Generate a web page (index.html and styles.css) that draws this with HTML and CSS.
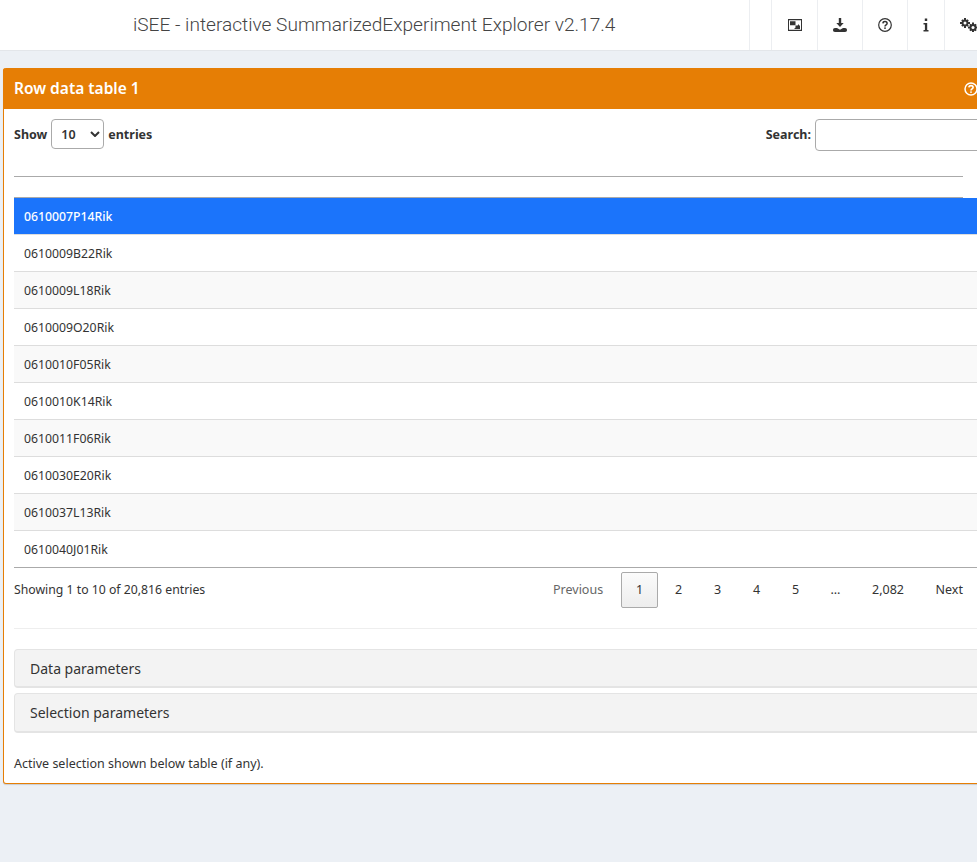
FILE: index.html
```html
<!DOCTYPE html>
<html lang="en">
<head>
<meta charset="utf-8">
<title>iSEE</title>
<link rel="stylesheet" href="styles.css">
</head>
<body>
<header class="navbar">
  <div class="brand">iSEE - interactive SummarizedExperiment Explorer v2.17.4</div>
  <nav class="nav-items">
    <div class="nav-item w22"></div>
    <div class="nav-item w46">
      <svg class="icon" viewBox="0 0 14 14" width="14" height="14"><path fill="#333" fill-rule="evenodd" d="M0 1h14v12H0zM1 2.300v9.400h12V2.300z"/><path fill="#333" d="M2 3.300h5.500v4H2zM7.500 7.500h4.500v3.500H7.500zM6 11l5-5v5z"/></svg>
    </div>
    <div class="nav-item w45">
      <svg class="icon" viewBox="0 0 14 14" width="14" height="14"><path fill="#333" d="M5.800 0h2.400v5h2.500L7 9 3.300 5h2.500zM0 12c0-1.200.8-2 2-2h2l3 1.700 3-1.700h2c1.200 0 2 .8 2 2 0 1-.6 2-2 2H2c-1.400 0-2-1-2-2z"/></svg>
    </div>
    <div class="nav-item w45">
      <svg class="icon" viewBox="0 0 14 14" width="14" height="14"><circle cx="7" cy="7" r="6.300" fill="none" stroke="#333" stroke-width="1.200"/><path fill="none" stroke="#333" stroke-width="1.500" d="M4.900 5.400C5 4 6 3.600 7 3.600c1.200 0 2.100.7 2.100 1.800C9.100 6.900 7 6.800 7 8.500"/><rect x="6.200" y="9.400" width="1.600" height="1.500" fill="#333"/></svg>
    </div>
    <div class="nav-item w37">
      <svg class="icon" viewBox="0 0 6 14" width="6" height="14"><path fill="#333" d="M1.800.5h2.400v2.400H1.800zM.5 5h3.700v7H5.500v1.500H.5V12h1.400V6.500H.5z"/></svg>
    </div>
    <div class="nav-item w50">
      <svg class="icon cogs" viewBox="0 0 18 14" width="18" height="14"><g fill="#333"><circle cx="5" cy="5" r="3.400"/><path d="M4 0h2v10H4zM0 4h10v2H0zM1.200 2.600l1.400-1.400 6.200 6.200-1.400 1.400zM7.400 1.200l1.400 1.400-6.200 6.200-1.400-1.400z"/><circle cx="13" cy="9.500" r="3.400"/><path d="M12 4.500h2v10h-2zM8 8.500h10v2H8zM9.200 7.100l1.400-1.400 6.200 6.200-1.400 1.400zM15.400 5.700l1.400 1.400-6.200 6.200-1.400-1.400z"/></g><circle cx="5" cy="5" r="1.500" fill="#fff"/><circle cx="13" cy="9.500" r="1.500" fill="#fff"/></svg>
    </div>
  </nav>
</header>

<main class="box">
  <div class="box-header">
    <h3 class="box-title">Row data table 1</h3>
    <svg class="help" viewBox="0 0 14 14" width="14" height="14"><circle cx="7" cy="7" r="6" fill="none" stroke="#fff" stroke-width="1.500"/><path fill="none" stroke="#fff" stroke-width="1.600" d="M4.900 5.400C5 4 6 3.600 7 3.600c1.200 0 2.100.7 2.100 1.800C9.100 6.900 7 6.800 7 8.500"/><rect x="6.200" y="9.400" width="1.600" height="1.500" fill="#fff"/></svg>
  </div>
  <div class="box-body">
    <div class="controls">
      <label class="ctl">Show
        <span class="select">10
          <svg viewBox="0 0 10 6" width="10" height="6"><path fill="none" stroke="#333" stroke-width="2" d="M1 1l4 4 4-4"/></svg>
        </span>
        entries</label>
      <label class="ctl">Search: <span class="search"></span></label>
    </div>
    <div class="head-space"></div>
    <div class="rows">
      <div class="row selected">0610007P14Rik</div>
      <div class="row">0610009B22Rik</div>
      <div class="row odd">0610009L18Rik</div>
      <div class="row">0610009O20Rik</div>
      <div class="row odd">0610010F05Rik</div>
      <div class="row">0610010K14Rik</div>
      <div class="row odd">0610011F06Rik</div>
      <div class="row">0610030E20Rik</div>
      <div class="row odd">0610037L13Rik</div>
      <div class="row">0610040J01Rik</div>
    </div>
    <div class="footer">
      <div class="info">Showing 1 to 10 of 20,816 entries</div>
      <div class="pager">
        <span class="pg prev">Previous</span>
        <span class="pg num current">1</span>
        <span class="pg num">2</span>
        <span class="pg num">3</span>
        <span class="pg num">4</span>
        <span class="pg num">5</span>
        <span class="pg dots">…</span>
        <span class="pg big">2,082</span>
        <span class="pg next">Next</span>
      </div>
    </div>
    <hr class="rule">
    <div class="collapse first">Data parameters</div>
    <div class="collapse second">Selection parameters</div>
    <p class="note">Active selection shown below table (if any).</p>
  </div>
</main>
</body>
</html>
```

FILE: styles.css
```css
html, body { margin: 0; padding: 0; }
body {
  width: 977px;
  height: 862px;
  overflow: hidden;
  background: #ecf0f5;
  color: #333;
  font-family: "Noto Sans", sans-serif;
  font-size: 12.25px;
}
.navbar {
  display: flex;
  justify-content: space-between;
  width: 1000px;
  height: 50px;
  background: #fff;
  border-bottom: 1px solid #e3e6ea;
}
.brand {
  padding-left: 133px;
  line-height: 50px;
  font-family: Roboto, sans-serif;
  font-weight: 300;
  font-size: 19.1px;
  color: #444;
}
.nav-items { display: flex; margin-left: auto; }
.nav-item {
  display: flex;
  align-items: center;
  justify-content: center;
  height: 50px;
  box-sizing: border-box;
  border-left: 1px solid #eceef1;
}
.w22 { width: 22px; }
.w46 { width: 46px; }
.w45 { width: 45px; }
.w37 { width: 37px; }
.w50 { width: 56px; justify-content: flex-start; padding-left: 15px; }
.icon { display: block; margin-top: -1px; }
.box {
  width: 1000px;
  box-sizing: border-box;
  margin: 17px 0 0 3px;
  background: #fff;
  border: 1px solid #e67e05;
  border-top: 0;
  border-radius: 3px;
  box-shadow: 0 1px 1px rgba(0, 0, 0, .15);
}
.box-header {
  display: flex;
  align-items: center;
  justify-content: space-between;
  height: 41px;
  margin: 0 -1px;
  padding: 0 16px 0 11px;
  background: #e67e05;
  color: #fff;
  border-radius: 3px 3px 0 0;
}
.box-title { margin: 0 0 2px; font-size: 15.5px; font-weight: 600; }
.help { margin-right: 9px; }
.box-body { padding: 10px; }
.controls {
  display: flex;
  justify-content: space-between;
  align-items: flex-start;
  height: 34px;
}
.ctl {
  display: flex;
  align-items: center;
  gap: 4px;
  font-weight: 700;
  font-size: 12.5px;
  height: 30px;
}
.select {
  display: flex;
  align-items: center;
  justify-content: space-between;
  box-sizing: border-box;
  width: 53px;
  height: 30px;
  padding: 0 3px 0 9px;
  border: 1px solid #aaa;
  border-radius: 4px;
  font-weight: 600;
}
.search {
  display: block;
  box-sizing: border-box;
  width: 177px;
  height: 32px;
  margin-bottom: -2px;
  border: 1px solid #aaa;
  border-radius: 4px;
}
.head-space {
  width: 949px;
  box-sizing: border-box;
  height: 22px;
  margin-top: 23px;
  border-top: 1px solid #aaa;
  border-bottom: 1px solid #aaa;
}
.row {
  box-sizing: border-box;
  height: 37px;
  padding-left: 10px;
  line-height: 37px;
  border-bottom: 1px solid #ddd;
  background: #fff;
}
.row:last-child { border-bottom-color: #aaa; }
.odd { background: #f9f9f9; }
.selected { background: #1b74fb; color: #fff; font-weight: 500; }
.footer {
  display: flex;
  justify-content: space-between;
  padding-right: 29px;
  height: 60px;
}
.info { padding-top: 13px; }
.pager { display: flex; align-items: flex-start; padding-top: 4px; font-size: 12.5px; }
.pg {
  box-sizing: border-box;
  height: 36px;
  line-height: 36px;
  text-align: center;
}
.prev { width: 68px; color: #666; text-align: left; }
.num { width: 39px; }
.current {
  width: 37px;
  margin-right: 1px;
  line-height: 34px;
  background: linear-gradient(#fbfbfb, #ededed);
  border: 1px solid #aaa;
  border-radius: 2px;
}
.dots { width: 41px; }
.big { width: 64px; }
.next { width: 43px; text-align: right; }
.rule { margin: 0; border: 0; border-top: 1px solid #eee; }
.collapse {
  box-sizing: border-box;
  height: 39px;
  margin-top: 20px;
  padding-left: 15px;
  line-height: 37px;
  font-size: 14px;
  background: #f3f3f3;
  border: 1px solid #e4e4e4;
  border-bottom-width: 2px;
  border-radius: 4px;
}
.second { height: 40px; margin-top: 5px; line-height: 38px; }
.note { margin: 22px 0 0; line-height: 18px; font-size: 12.5px; }
```
